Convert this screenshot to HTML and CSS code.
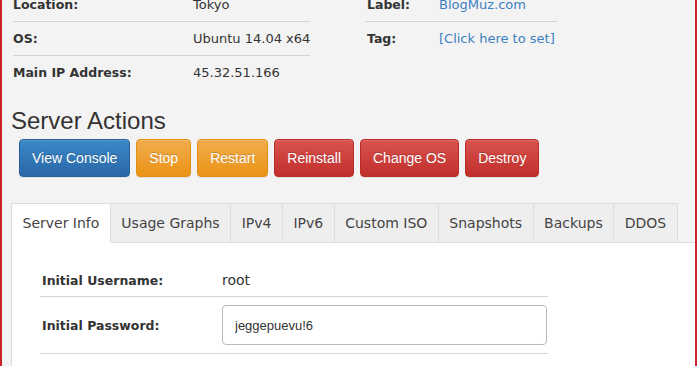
FILE: index.html
```html
<!DOCTYPE html>
<html lang="en">
<head>
    <meta charset="UTF-8">
    <meta name="viewport" content="width=device-width, initial-scale=1.0">
    <title>Server Details</title>
    <link rel="stylesheet" href="styles.css">
</head>

<body>
    <div class="page">

        <div class="details">
            <table class="info info-main">
                <tr><th>Location:</th><td>Tokyo</td></tr>
                <tr><th>OS:</th><td>Ubuntu 14.04 x64</td></tr>
                <tr><th>Main IP Address:</th><td>45.32.51.166</td></tr>
            </table>
            <table class="info info-side">
                <tr><th>Label:</th><td><a href="#">BlogMuz.com</a></td></tr>
                <tr><th>Tag:</th><td><a href="#">[Click here to set]</a></td></tr>
            </table>
        </div>

        <h2 class="section-title">Server Actions</h2>
        <div class="actions">
            <button class="btn btn-primary">View Console</button>
            <button class="btn btn-warning">Stop</button>
            <button class="btn btn-warning">Restart</button>
            <button class="btn btn-danger">Reinstall</button>
            <button class="btn btn-danger">Change OS</button>
            <button class="btn btn-danger">Destroy</button>
        </div>

        <ul class="tabs">
            <li class="active">Server Info</li>
            <li>Usage Graphs</li>
            <li>IPv4</li>
            <li>IPv6</li>
            <li>Custom ISO</li>
            <li>Snapshots</li>
            <li>Backups</li>
            <li>DDOS</li>
        </ul>

        <div class="tab-panel">
            <table class="info info-login">
                <tr><th>Initial Username:</th><td>root</td></tr>
                <tr><th>Initial Password:</th><td><input class="pass-input" type="text" value="jeggepuevu!6" readonly></td></tr>
            </table>
        </div>
    </div>
</body>

</html>
```

FILE: styles.css
```css
* {
    box-sizing: border-box;
}

body {
    margin: 0;
    background-color: #fff;
}

.page {
    width: 697px;
    height: 100vh;
    padding-left: 9px;
    background-color: #f3f3f3;
    border-left: 2px solid #cc2229;
    border-right: 2px solid #cc2229;
    font-family: "DejaVu Sans", sans-serif;
    color: #333;
    overflow: hidden;
}

.details {
    display: flex;
    align-items: flex-start;
    margin-top: -12px;
}

.info {
    border-collapse: separate;
    border-spacing: 0;
    table-layout: fixed;
}

.info th,
.info td {
    text-align: left;
    vertical-align: middle;
    padding: 8px 0;
    line-height: 17px;
    white-space: nowrap;
}

.info th {
    font-size: 12.5px;
    font-weight: bold;
}

.info td {
    font-size: 13px;
}

.info tr + tr th,
.info tr + tr td {
    border-top: 1px solid #d4d4d4;
}

.info a {
    color: #3d7fc2;
    text-decoration: none;
}

.info-main {
    width: 297px;
    margin-left: 2px;
}
.info-main th {
    width: 180px;
}

.info-side {
    width: 192px;
    margin-left: 55px;
}
.info-side th {
    width: 74px;
    padding-left: 2px;
}

.section-title {
    margin: 18px 0 5px;
    font-family: "Liberation Sans", Arial, sans-serif;
    font-size: 24px;
    font-weight: normal;
    line-height: 27px;
    color: #333;
}

.actions {
    display: flex;
    gap: 6px;
    margin-left: 8px;
}

.btn {
    padding: 9px 12px;
    font-family: "Liberation Sans", Arial, sans-serif;
    font-size: 14px;
    line-height: 18px;
    color: #fff;
    border: 1px solid transparent;
    border-radius: 4px;
    text-shadow: 0 -1px 0 rgba(0, 0, 0, 0.2);
    box-shadow: inset 0 1px 0 rgba(255, 255, 255, 0.15), 0 1px 1px rgba(0, 0, 0, 0.075);
    cursor: pointer;
}

.btn-primary {
    background-image: linear-gradient(to bottom, #3b88c8 0, #2a67a6 100%);
    border-color: #28609c;
}

.btn-warning {
    background-image: linear-gradient(to bottom, #f0ad4e 0, #eb9316 100%);
    border-color: #e38d13;
}

.btn-danger {
    background-image: linear-gradient(to bottom, #d9534f 0, #c12e2a 100%);
    border-color: #b92c28;
}

.tabs {
    display: flex;
    margin: 26px 0 0;
    padding: 0;
    list-style: none;
    border-bottom: 1px solid #ddd;
}

.tabs li {
    margin-bottom: -1px;
    padding: 0 10.5px;
    font-size: 14px;
    line-height: 38px;
    color: #444;
    background-color: #eee;
    border: 1px solid #ddd;
    border-left: 0;
    cursor: pointer;
}

.tabs li:first-child {
    border-left: 1px solid #ddd;
}

.tabs li.active {
    background-color: #fff;
    border-bottom-color: #fff;
}

.tab-panel {
    height: 200px;
    padding: 22px 0 0 28px;
    background-color: #fff;
    border-left: 1px solid #ddd;
}

.info-login {
    width: 508px;
}
.info-login th {
    width: 180px;
}
.info-login th,
.info-login td {
    padding: 7px 2px;
}
.info-login td {
    font-size: 14px;
}
.info-login tr + tr th,
.info-login tr + tr td {
    padding: 8px 2px;
}
.info-login tr:last-child th,
.info-login tr:last-child td {
    border-bottom: 1px solid #d4d4d4;
}

.pass-input {
    display: block;
    width: 325px;
    height: 40px;
    padding: 0 12px;
    font-family: "Liberation Sans", Arial, sans-serif;
    font-size: 13px;
    color: #333;
    background-color: #fff;
    border: 1px solid #bbb;
    border-radius: 4px;
    outline: none;
}
```
